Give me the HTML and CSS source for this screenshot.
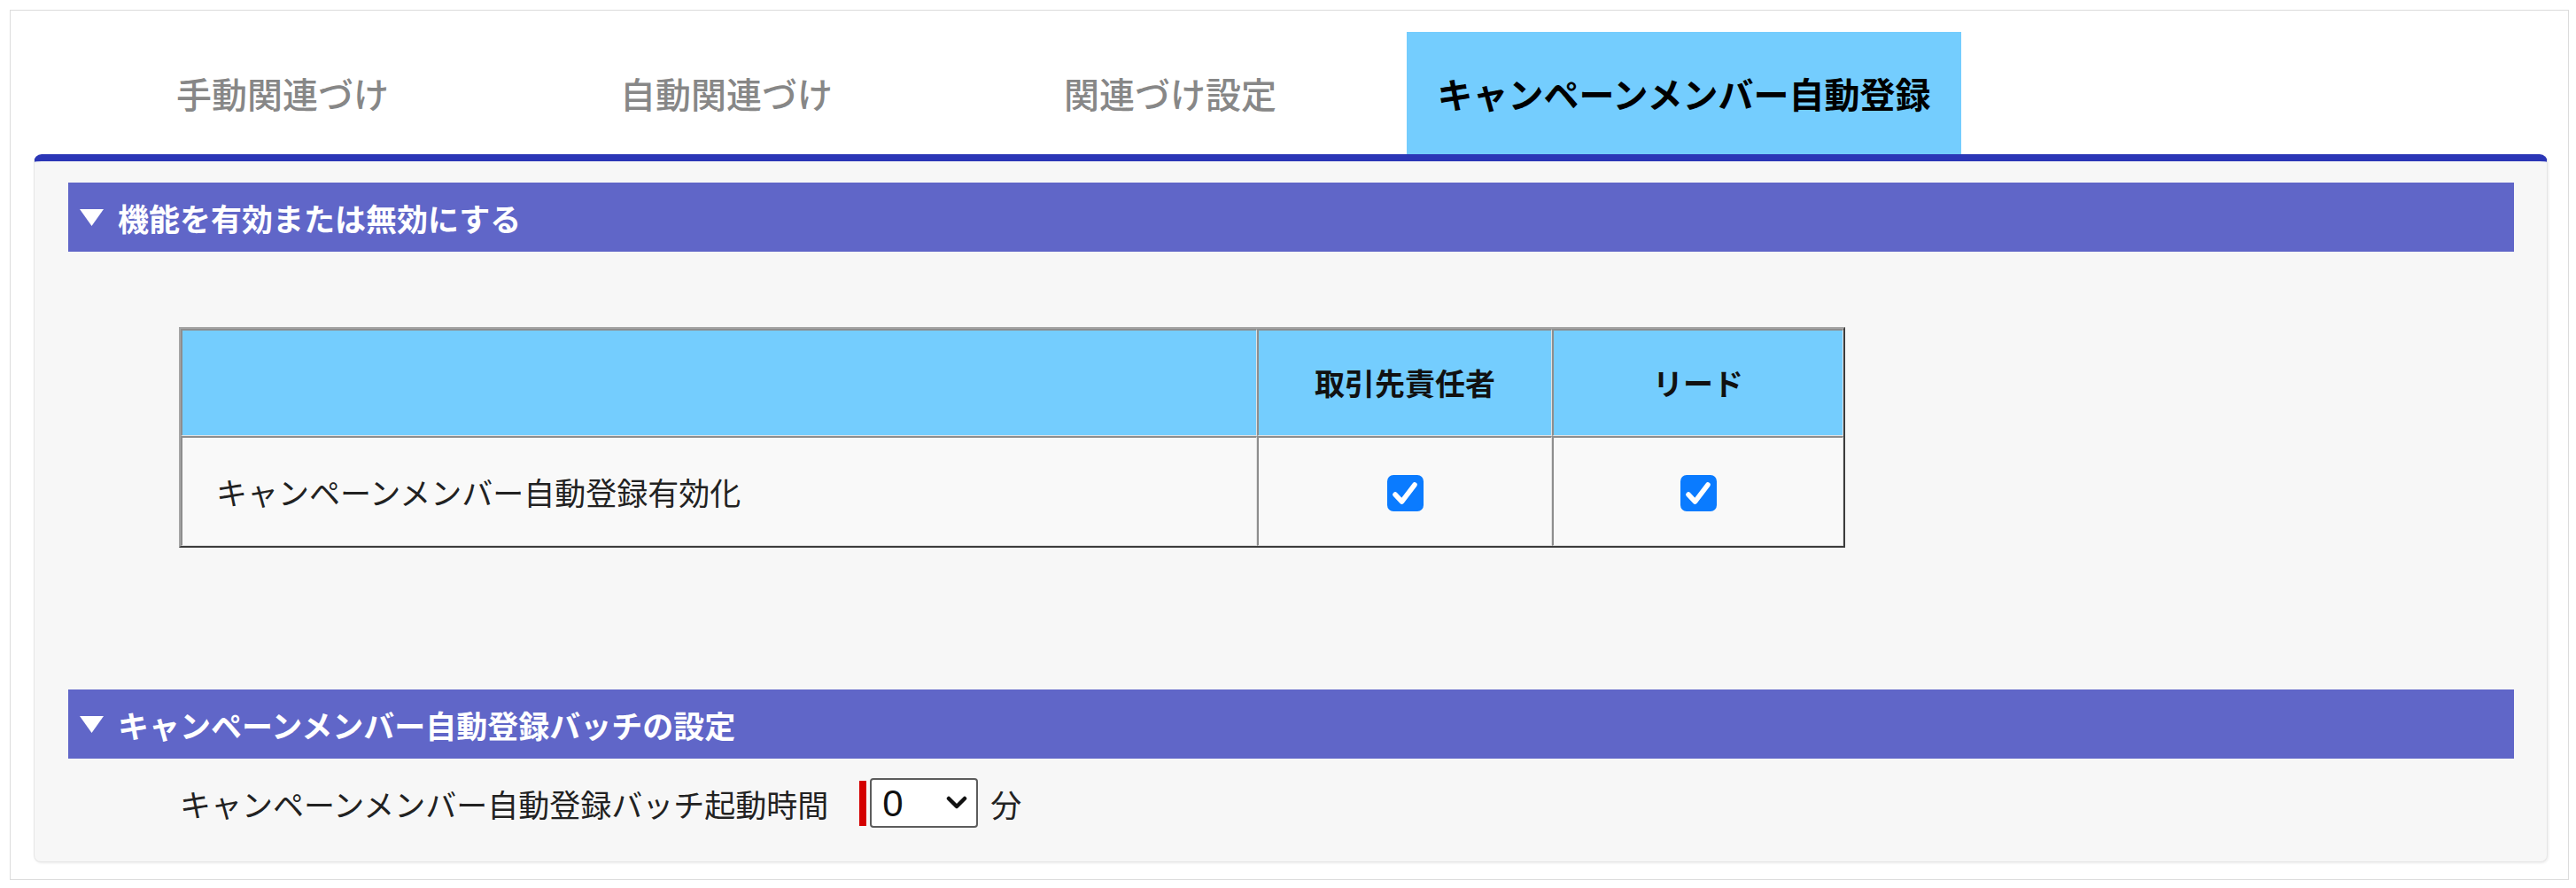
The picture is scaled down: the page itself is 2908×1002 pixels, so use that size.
FILE: index.html
```html
<!DOCTYPE html>
<html lang="ja">
<head>
	<meta charset="UTF-8">
	<title>キャンペーンメンバー自動登録</title>
	<link rel="stylesheet" href="styles.css">
</head>
<body>
	<div class="card">
		<ul class="tabs">
			<li class="tab">手動関連づけ</li>
			<li class="tab">自動関連づけ</li>
			<li class="tab">関連づけ設定</li>
			<li class="tab active">キャンペーンメンバー自動登録</li>
		</ul>

		<div class="panel">
			<h3 class="section-head">
				<svg class="toggle" viewBox="0 0 27 19"><polygon points="0,0 27,0 13.5,19" fill="#fff"/></svg>
				機能を有効または無効にする
			</h3>

			<table class="grid">
				<tr>
					<th class="col-name"></th>
					<th class="col-type">取引先責任者</th>
					<th>リード</th>
				</tr>
				<tr>
					<td class="label-cell">キャンペーンメンバー自動登録有効化</td>
					<td class="check-cell">
						<span class="check"><svg viewBox="0 0 41 41"><rect width="41" height="41" rx="7" fill="#0a7bff"/><path d="M9 22 L16.5 30 L31 11" fill="none" stroke="#fff" stroke-width="5.5" stroke-linecap="round" stroke-linejoin="round"/></svg></span>
					</td>
					<td class="check-cell">
						<span class="check"><svg viewBox="0 0 41 41"><rect width="41" height="41" rx="7" fill="#0a7bff"/><path d="M9 22 L16.5 30 L31 11" fill="none" stroke="#fff" stroke-width="5.5" stroke-linecap="round" stroke-linejoin="round"/></svg></span>
					</td>
				</tr>
			</table>

			<h3 class="section-head second">
				<svg class="toggle" viewBox="0 0 27 19"><polygon points="0,0 27,0 13.5,19" fill="#fff"/></svg>
				キャンペーンメンバー自動登録バッチの設定
			</h3>

			<div class="field-row">
				<label for="batchTime">キャンペーンメンバー自動登録バッチ起動時間</label>
				<span class="required"></span>
				<span class="select-wrap">
					<select id="batchTime">
						<option>0</option>
						<option>15</option>
						<option>30</option>
						<option>45</option>
					</select>
					<svg class="chevron" viewBox="0 0 24 16"><path d="M3 3 L12 12 L21 3" fill="none" stroke="#111" stroke-width="4.5" stroke-linecap="round" stroke-linejoin="round"/></svg>
				</span>
				<span class="unit">分</span>
			</div>
		</div>
	</div>
</body>
</html>
```

FILE: styles.css
```css
body {
	margin: 11px 8px 0 11px;
	background-color: #fff;
	font-family: "Noto Sans CJK JP", "Liberation Sans", sans-serif;
	color: #222;
}
.card {
	background-color: #fff;
	border: 1px solid #dcdcdc;
	box-shadow: 0 0 4px rgba(0, 0, 0, 0.18);
	padding: 24px 23px 19px 26px;
}
.tabs {
	list-style: none;
	margin: 0 0 0 39px;
	padding: 0;
	display: flex;
	gap: 17px;
	height: 138px;
}
.tab {
	width: 484px;
	display: flex;
	align-items: center;
	justify-content: center;
	font-size: 40px;
	font-weight: 500;
	line-height: 1;
	color: #878787;
}
.tab.active {
	width: 626px;
	margin-left: 8px;
	background-color: #74cdfe;
	color: #000;
	font-weight: bold;
}
.panel {
	background-color: #f7f7f7;
	border: 1px solid #e6e6e6;
	border-top: 8px solid #2b36b6;
	border-radius: 9px 9px 8px 8px;
	box-shadow: 1px 1px 3px rgba(0, 0, 0, 0.08);
	padding: 24px 37px 38px 38px;
}
.section-head {
	margin: 0;
	height: 78px;
	background-color: #6066c8;
	color: #fff;
	font-size: 35px;
	font-weight: bold;
	line-height: 1;
	display: flex;
	align-items: center;
	padding-left: 13px;
}
.section-head .toggle {
	width: 27px;
	height: 19px;
	margin-right: 16px;
}
.section-head.second {
	margin-top: 160px;
}
.grid {
	margin: 85px 0 0 125px;
	width: 1881px;
	table-layout: fixed;
	border-collapse: separate;
	border-spacing: 0;
	border-style: solid;
	border-width: 2px;
	border-color: #a5a5a5 #3c3c3c #3c3c3c #a5a5a5;
	font-size: 35px;
	line-height: 1;
}
.grid th,
.grid td {
	box-sizing: border-box;
	border-style: solid;
	border-width: 2px 1px 1px 2px;
	border-color: #8e8e8e #e2e2e2 #e2e2e2 #8e8e8e;
}
.grid th {
	height: 121px;
	background-color: #74cdfe;
	color: #111;
	font-size: 34px;
	font-weight: bold;
	text-align: center;
}
.grid .col-name {
	width: 1215px;
}
.grid .col-type {
	width: 333px;
}
.grid td {
	height: 124px;
	background-color: #f9f9f9;
}
.grid .label-cell {
	padding-left: 38px;
	color: #222;
}
.grid .check-cell {
	text-align: center;
}
.check {
	display: inline-block;
	width: 41px;
	height: 41px;
	vertical-align: middle;
}
.check svg {
	display: block;
	width: 41px;
	height: 41px;
}
.field-row {
	display: flex;
	align-items: center;
	margin-top: 22px;
	padding-left: 126px;
	font-size: 35px;
	line-height: 1;
	color: #222;
}
.required {
	display: inline-block;
	width: 8px;
	height: 51px;
	margin-left: 35px;
	margin-right: 4px;
	background-color: #d40000;
}
.select-wrap {
	position: relative;
	display: inline-block;
}
.select-wrap select {
	-webkit-appearance: none;
	appearance: none;
	width: 122px;
	height: 56px;
	box-sizing: border-box;
	border: 2px solid #5c5c5c;
	border-radius: 4px;
	background-color: #fff;
	font-family: "Liberation Sans", sans-serif;
	font-size: 42px;
	color: #111;
	padding: 0 0 0 12px;
}
.select-wrap .chevron {
	position: absolute;
	right: 12px;
	top: 20px;
	width: 24px;
	height: 16px;
	pointer-events: none;
}
.unit {
	margin-left: 14px;
}
```
